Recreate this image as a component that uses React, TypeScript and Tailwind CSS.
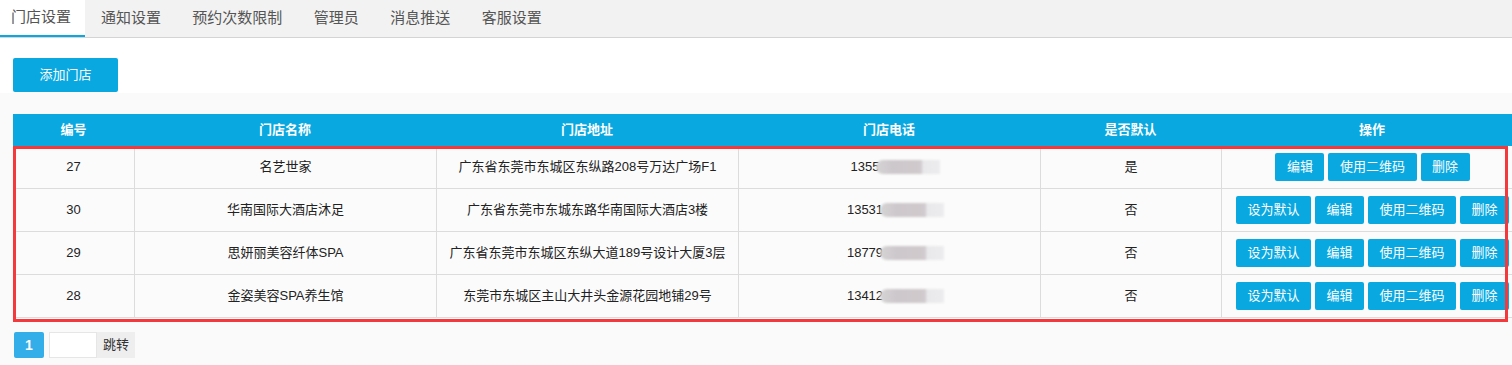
const tabs = ["门店设置", "通知设置", "预约次数限制", "管理员", "消息推送", "客服设置"];

const stores = [
  { id: 27, name: "名艺世家", addr: "广东省东莞市东城区东纵路208号万达广场F1", phone: "1355", isDefault: true },
  { id: 30, name: "华南国际大酒店沐足", addr: "广东省东莞市东城东路华南国际大酒店3楼", phone: "13531", isDefault: false },
  { id: 29, name: "思妍丽美容纤体SPA", addr: "广东省东莞市东城区东纵大道189号设计大厦3层", phone: "18779", isDefault: false },
  { id: 28, name: "金姿美容SPA养生馆", addr: "东莞市东城区主山大井头金源花园地铺29号", phone: "13412", isDefault: false },
];

const cols = "grid grid-cols-[121px_302px_302px_302px_181px_302px]";

function Btn({ children }: { children: React.ReactNode }) {
  return (
    <button className="h-[28px] px-[11.5px] rounded-[2px] bg-[#09a8e0] text-white text-[13px] leading-[28px] whitespace-nowrap">
      {children}
    </button>
  );
}

function Masked({ digits }: { digits: string }) {
  return (
    <div className="flex items-center ml-[12px]">
      <span>{digits}</span>
      <span className="-ml-[3px] inline-block h-[14px] w-[64px] rounded-l-full blur-[1px] bg-[linear-gradient(to_right,#d6d4d5_0%,#cdc8cc_25%,#d0cacd_70%,#e9e9eb_74%,#ececee_100%)]" />
    </div>
  );
}

export default function App() {
  return (
    <div
      className="w-[1512px] h-[365px] overflow-hidden bg-[#fafafa] text-[#222]"
      style={{ fontFamily: '"Liberation Sans", "Noto Sans CJK SC", sans-serif' }}
    >
      {/* Tabs */}
      <div className="h-[38px] bg-[#f2f2f2] border-b border-[#d4d4d4] flex text-[15px] text-[#555]">
        {tabs.map((t, i) => (
          <div
            key={t}
            className={
              i === 0
                ? "h-full w-[85px] pl-[11px] flex items-center bg-white border-b-2 border-[#09a8e0]"
                : i === 1
                ? "h-full pl-[16px] pr-[15.5px] flex items-center"
                : "h-full px-[15.75px] flex items-center"
            }
          >
            {t}
          </div>
        ))}
      </div>

      {/* Toolbar */}
      <div className="bg-white px-[13px] pt-[20px] pb-[1px]">
        <button className="h-[34px] w-[105px] rounded-[2px] bg-[#09a8e0] text-white text-[13px]">
          添加门店
        </button>
      </div>

      {/* Table */}
      <div className="px-[13px] pt-[21px]">
        <div className="relative w-[1510px] text-[13px]">
          <div className={`${cols} h-[32px] bg-[#09a8e0] text-white font-bold`}>
            {["编号", "门店名称", "门店地址", "门店电话", "是否默认", "操作"].map((h) => (
              <div key={h} className="flex items-center justify-center">
                {h}
              </div>
            ))}
          </div>
          {stores.map((s) => (
            <div key={s.id} className={`${cols} h-[43px] border-b border-[#dcdcdc] bg-[#fbfbfb]`}>
              <div className="flex items-center justify-center">{s.id}</div>
              <div className="flex items-center justify-center border-l border-[#dcdcdc]">{s.name}</div>
              <div className="flex items-center justify-center border-l border-[#dcdcdc]">{s.addr}</div>
              <div className="flex items-center justify-center border-l border-[#dcdcdc]">
                <Masked digits={s.phone} />
              </div>
              <div className="flex items-center justify-center border-l border-[#dcdcdc]">
                {s.isDefault ? "是" : "否"}
              </div>
              <div className="flex items-center justify-center gap-[4px] border-l border-[#dcdcdc]">
                {!s.isDefault && <Btn>设为默认</Btn>}
                <Btn>编辑</Btn>
                <Btn>使用二维码</Btn>
                <Btn>删除</Btn>
              </div>
            </div>
          ))}
          {/* highlight box */}
          <div className="absolute left-0 top-[32px] w-[1495px] h-[176px] border-[3px] border-[#f4393c] pointer-events-none" />
        </div>

        {/* Pagination */}
        <div className="mt-[14px] flex items-center h-[26px] text-[13px]">
          <div className="ml-[1px] h-[26px] w-[30px] rounded-[2px] bg-[#33aee8] text-white text-[14px] font-bold flex items-center justify-center">
            1
          </div>
          <div className="ml-[5px] h-[26px] w-[48px] bg-white border border-[#e6e6e6]" />
          <div className="h-[26px] w-[38px] bg-[#eeeeee] flex items-center justify-center text-[#333]">
            跳转
          </div>
        </div>
      </div>
    </div>
  );
}
